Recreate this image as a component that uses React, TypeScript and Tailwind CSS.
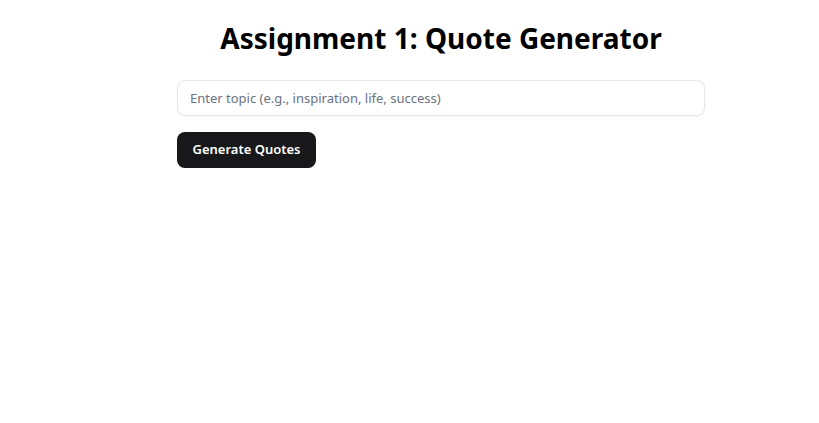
export default function App() {
  return (
    <main className="min-h-screen bg-white font-['Noto_Sans',sans-serif] text-black">
      <div className="ml-[177px] w-[528px] pt-[20px]">
        <h1 className="text-center text-[28px] font-bold leading-9">Assignment 1: Quote Generator</h1>
        <div className="mt-[24px] flex flex-col gap-4">
          <input
            type="text"
            placeholder="Enter topic (e.g., inspiration, life, success)"
            className="h-9 w-full rounded-lg border border-gray-200 px-3 text-[13px] shadow-xs placeholder:text-gray-500 outline-none"
          />
          <button className="h-9 w-[139px] rounded-lg bg-[#18181b] text-[13px] font-semibold text-white">
            Generate Quotes
          </button>
        </div>
      </div>
    </main>
  );
}
